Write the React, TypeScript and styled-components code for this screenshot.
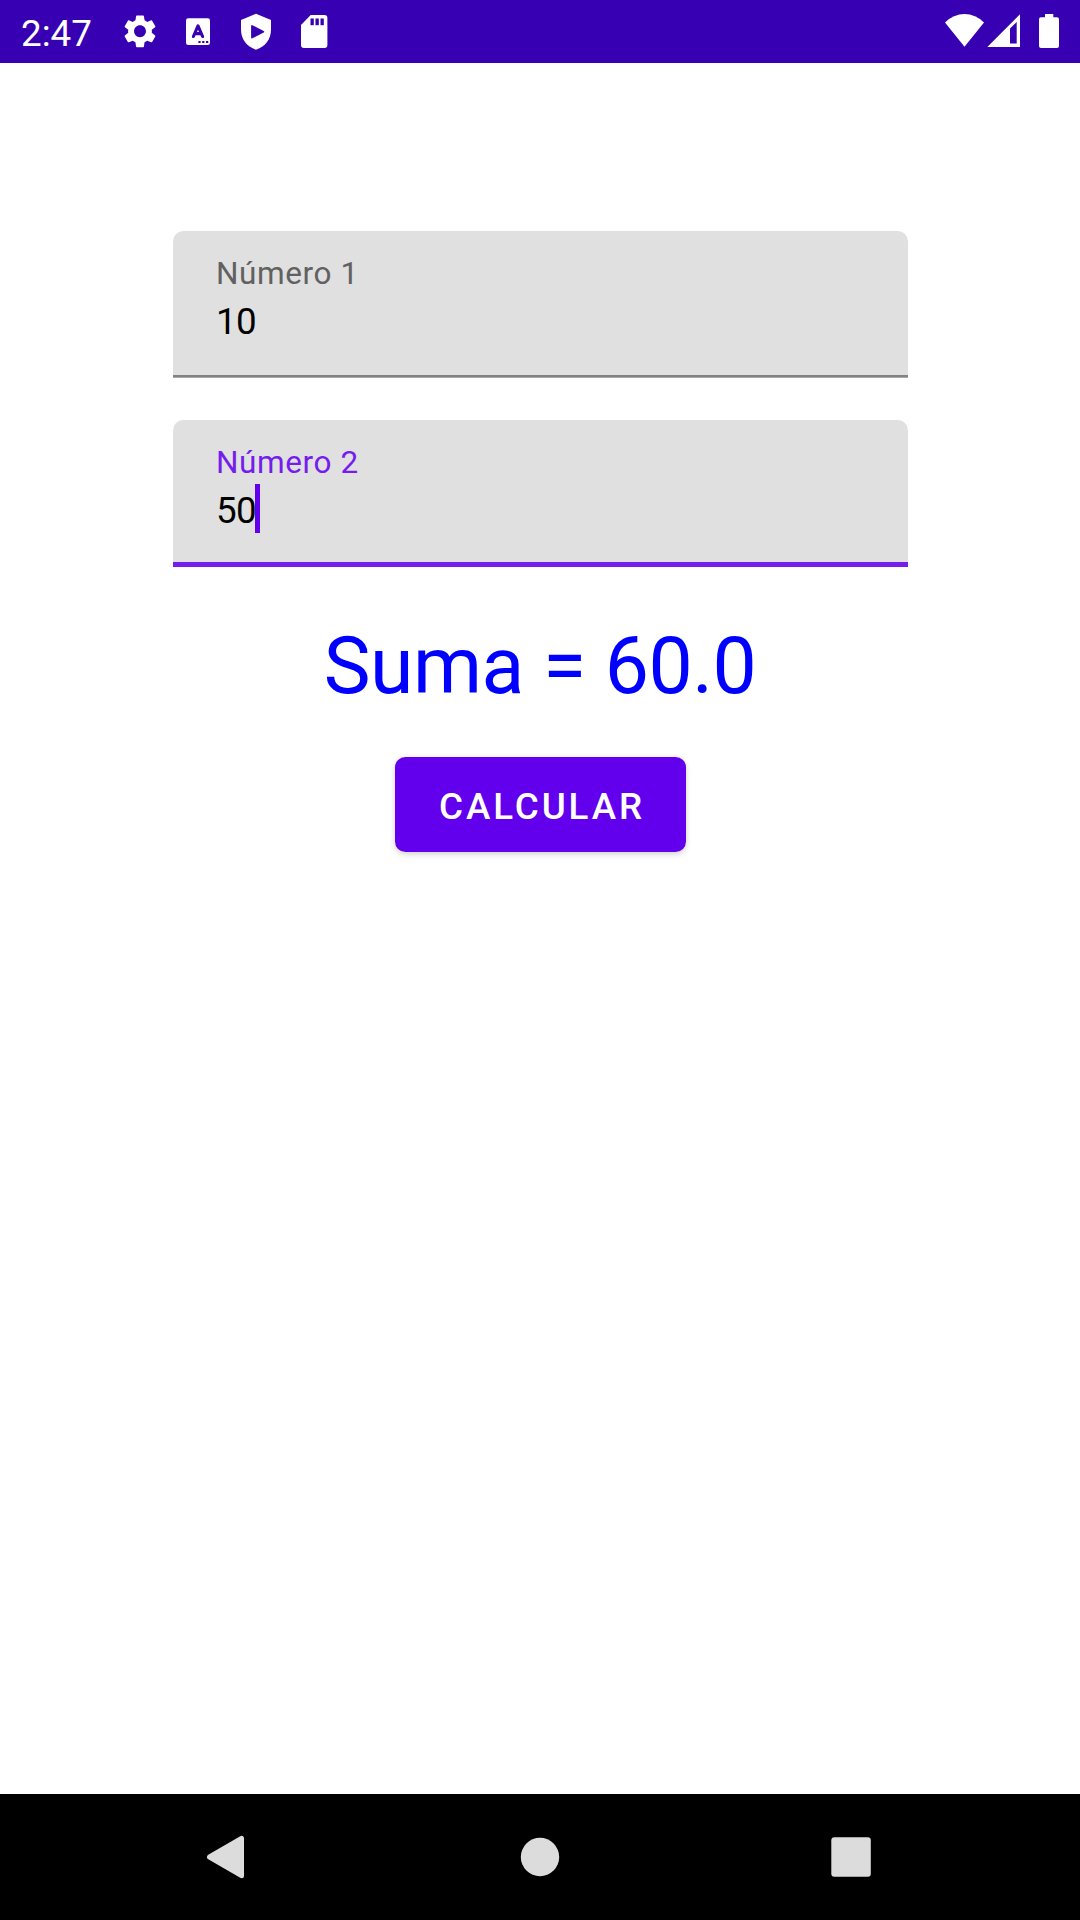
import React from "react";
import styled, { createGlobalStyle } from "styled-components";

const GlobalStyle = createGlobalStyle`
  html, body { margin: 0; padding: 0; background: #fff; }
  * { box-sizing: border-box; }
`;

const Screen = styled.div`
  display: flex;
  flex-direction: column;
  width: 1080px;
  height: 1920px;
  overflow: hidden;
  background: #fff;
  font-family: Roboto, sans-serif;
`;

const StatusBar = styled.header`
  display: flex;
  justify-content: space-between;
  height: 63px;
  flex: none;
  padding: 0 18px 0 21px;
  background: #3700b3;
  color: #fff;
`;

const StatusGroup = styled.div`
  display: flex;
  align-items: flex-start;
`;

const Clock = styled.span`
  width: 94px;
  font-size: 36.75px;
  line-height: 43px;
  padding-top: 12px;
`;

const StatusIcon = styled.svg<{ $gap?: number }>`
  display: block;
  flex: none;
  height: 63px;
  margin-left: ${({ $gap = 0 }) => $gap}px;
  fill: #fff;
`;

const Content = styled.main`
  flex: 1;
  display: flex;
  flex-direction: column;
  align-items: center;
  padding-top: 168px;
`;

const Field = styled.label<{ $active?: boolean }>`
  display: flex;
  flex-direction: column;
  width: 735px;
  height: 147px;
  margin: 0 0 42px 1px;
  padding: 24px 42px 0 43px;
  border-radius: 10.5px 10.5px 0 0;
  background: linear-gradient(
      ${({ $active }) => ($active ? "#741ded, #741ded" : "#828282, #828282")}
    )
    bottom / 100% ${({ $active }) => ($active ? "5px" : "2.6px")} no-repeat #e0e0e0;
`;

const FieldLabel = styled.span<{ $active?: boolean }>`
  font-size: 31.5px;
  line-height: 38px;
  letter-spacing: 0.6px;
  color: ${({ $active }) => ($active ? "#741ded" : "#616161")};
`;

const FieldValue = styled.span`
  display: flex;
  align-items: flex-start;
  height: 50px;
  margin-top: 2px;
  font-size: 36.75px;
  line-height: 54px;
  letter-spacing: -0.6px;
  color: #000;
`;

const Caret = styled.i`
  width: 5px;
  height: 49px;
  margin-left: -1px;
  background: #6200ee;
`;

const Result = styled.output`
  font-size: 78.75px;
  line-height: 92px;
  margin-top: 11px;
  letter-spacing: -0.5px;
  color: #0000ff;
`;

const CalcButton = styled.button`
  width: 291px;
  height: 95px;
  margin: 45px 0 0 1px;
  padding: 3px 0 0 3px;
  border: 0;
  border-radius: 10.5px;
  background: #6200ee;
  box-shadow: 0 3px 6px rgba(0, 0, 0, 0.13), 0 0 5px rgba(0, 0, 0, 0.08);
  font-family: inherit;
  font-size: 36.75px;
  font-weight: 500;
  line-height: 43px;
  letter-spacing: 2.9px;
  color: #fff;
`;

const NavBar = styled.nav`
  display: flex;
  justify-content: center;
  align-items: center;
  gap: 211px;
  height: 126px;
  flex: none;
  background: #000;
`;

const NavIcon = styled.svg`
  display: block;
  width: 100px;
  height: 126px;
  fill: #dcdcdc;
`;

export default function App() {
  return (
    <>
      <GlobalStyle />
      <Screen>
        <StatusBar>
          <StatusGroup>
            <Clock>2:47</Clock>
            <StatusIcon $gap={5} width="40" viewBox="120 0 40 63">
              <path
                transform="translate(120.2 11.5) scale(1.65)"
                d="M19.14 12.94c.04-.3.06-.61.06-.94 0-.32-.02-.64-.07-.94l2.03-1.58a.49.49 0 0 0 .12-.61l-1.92-3.32a.488.488 0 0 0-.59-.22l-2.39.96c-.5-.38-1.03-.7-1.62-.94l-.36-2.54a.484.484 0 0 0-.48-.41h-3.84c-.24 0-.43.17-.47.41l-.36 2.54c-.59.24-1.13.57-1.62.94l-2.39-.96c-.22-.08-.47 0-.59.22L2.74 8.87c-.12.21-.08.47.12.61l2.03 1.58c-.05.3-.09.63-.09.94s.02.64.07.94l-2.03 1.58a.49.49 0 0 0-.12.61l1.92 3.32c.12.22.37.29.59.22l2.39-.96c.5.38 1.03.7 1.62.94l.36 2.54c.05.24.24.41.48.41h3.84c.24 0 .44-.17.47-.41l.36-2.54c.59-.24 1.13-.56 1.62-.94l2.39.96c.22.08.47 0 .59-.22l1.92-3.32c.12-.22.07-.47-.12-.61l-2.01-1.58zM12 15.6c-1.98 0-3.6-1.62-3.6-3.6s1.62-3.6 3.6-3.6 3.6 1.62 3.6 3.6-1.62 3.6-3.6 3.6z"
              />
            </StatusIcon>
            <StatusIcon $gap={20} width="36" viewBox="180 0 36 63">
              <rect x="186" y="18.3" width="24" height="26.7" rx="2.2" />
              <path
                d="M193.4 36.5L198 25.8L202.6 36.500M195 33.6H201"
                fill="none"
                stroke="#3700b3"
                strokeWidth="3.1"
                strokeLinecap="round"
                strokeLinejoin="round"
              />
              <g fill="#3700b3">
                <rect x="198.4" y="41" width="2.2" height="2" />
                <rect x="202.2" y="41" width="2.2" height="2" />
                <rect x="206" y="41" width="2.2" height="2" />
              </g>
            </StatusIcon>
            <StatusIcon $gap={20} width="40" viewBox="236 0 40 63">
              <path d="M256 13.8L271 20V29.5C271 39 265.5 46.5 256 49.8C246.5 46.5 241 39 241 29.5V20Z" />
              <path
                d="M252 26V37.5L263.3 31.75Z"
                fill="#3700b3"
                stroke="#3700b3"
                strokeWidth="1.8"
                strokeLinejoin="round"
              />
            </StatusIcon>
            <StatusIcon $gap={20} width="36" viewBox="296 0 36 63">
              <path d="M310.7 15H324.5Q327.4 15 327.4 18V45Q327.4 48 324.5 48H303.9Q301 48 301 45V25Z" />
              <g fill="#3700b3">
                <rect x="310.5" y="18.5" width="3.3" height="6.7" />
                <rect x="315.5" y="18.5" width="3.3" height="6.7" />
                <rect x="320.5" y="18.5" width="3.3" height="6.7" />
              </g>
            </StatusIcon>
          </StatusGroup>
          <StatusGroup>
            <StatusIcon width="42" viewBox="943 0 42 63">
              <path d="M945 22.5Q953.5 14 964.5 14T984 22.5L964.5 46.8Z" />
            </StatusIcon>
            <StatusIcon width="37" viewBox="985 0 37 63">
              <path
                fillRule="evenodd"
                d="M1020 14.3V47H987.3ZM1010 28.500V43.500H1016.700V22Z"
              />
            </StatusIcon>
            <StatusIcon $gap={15} width="25" viewBox="1037 0 25 63">
              <path d="M1045 14H1053.3V17.3H1057Q1059 17.3 1059 19.3V46Q1059 48 1057 48H1041Q1039 48 1039 46V19.3Q1039 17.3 1041 17.3H1045Z" />
            </StatusIcon>
          </StatusGroup>
        </StatusBar>
        <Content>
          <Field>
            <FieldLabel>Número 1</FieldLabel>
            <FieldValue>10</FieldValue>
          </Field>
          <Field $active>
            <FieldLabel $active>Número 2</FieldLabel>
            <FieldValue>
              50
              <Caret />
            </FieldValue>
          </Field>
          <Result>Suma = 60.0</Result>
          <CalcButton>CALCULAR</CalcButton>
        </Content>
        <NavBar>
          <NavIcon viewBox="179 1794 100 126">
            <path
              d="M209.5 1857L241.5 1838.3V1875.7Z"
              stroke="#dcdcdc"
              strokeWidth="5"
              strokeLinejoin="round"
            />
          </NavIcon>
          <NavIcon viewBox="490 1794 100 126">
            <circle cx="540" cy="1857" r="19.2" />
          </NavIcon>
          <NavIcon viewBox="801 1794 100 126">
            <rect x="831.3" y="1837.3" width="39.5" height="39.5" rx="3" />
          </NavIcon>
        </NavBar>
      </Screen>
    </>
  );
}
